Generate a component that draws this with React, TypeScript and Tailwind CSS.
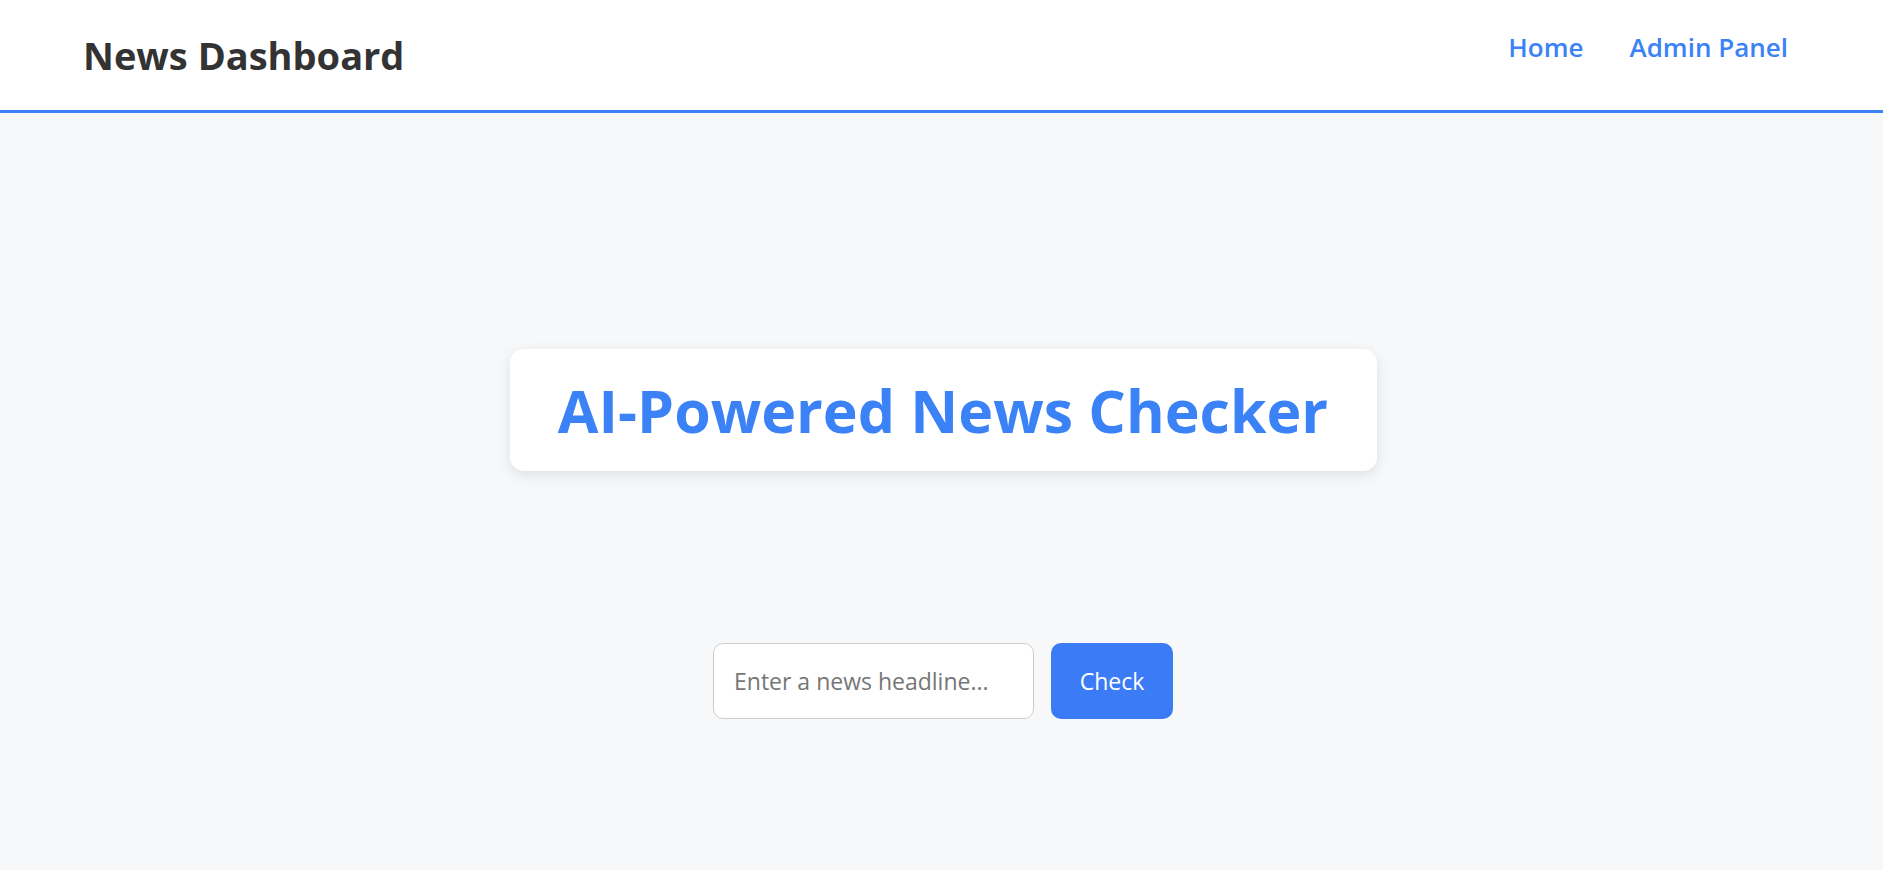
import React, { useState } from "react";

function Header() {
  return (
    <header className="flex h-[113px] items-center justify-between border-b-[3px] border-[#3b82f6] bg-white pl-[83px] pr-[95px]">
      <h1 className="text-[38px] font-bold leading-none text-[#333333]">
        News Dashboard
      </h1>
      <nav className="flex items-center gap-[46px] pb-[16px]">
        <a href="#" className="text-[26px] font-semibold leading-none text-[#3b82f6]">
          Home
        </a>
        <a href="#" className="text-[26px] font-semibold leading-none text-[#3b82f6]">
          Admin Panel
        </a>
      </nav>
    </header>
  );
}

export default function App() {
  const [headline, setHeadline] = useState("");

  return (
    <div className="min-h-[870px] bg-[#f7f8fa] font-['Open_Sans','Noto_Sans',sans-serif]">
      <Header />
      <main className="flex flex-col items-center gap-[172px] pl-[3px] pt-[236px]">
        <div className="flex h-[122px] w-[867px] items-center justify-center rounded-[14px] bg-white shadow-[0_4px_14px_rgba(0,0,0,0.1)]">
          <h2 className="text-[59px] font-bold leading-none text-[#3b82f6]">
            AI-Powered News Checker
          </h2>
        </div>
        <div className="flex items-center gap-[17px]">
          <input
            type="text"
            value={headline}
            onChange={(e) => setHeadline(e.target.value)}
            placeholder="Enter a news headline..."
            className="h-[76px] w-[321px] rounded-[10px] border border-[#cccccc] bg-white px-[20px] text-[23px] text-[#333333] outline-none placeholder:text-[#767676]"
          />
          <button className="h-[76px] w-[122px] rounded-[10px] bg-[#3b7cf6] text-[23px] text-white">
            Check
          </button>
        </div>
      </main>
    </div>
  );
}
